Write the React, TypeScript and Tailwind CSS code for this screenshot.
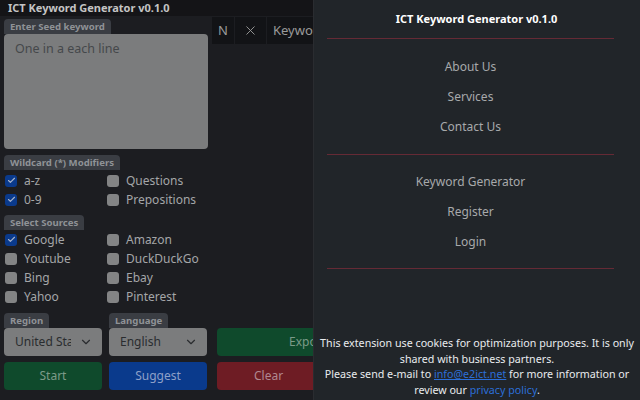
import { Check, ChevronDown, X } from 'lucide-react'

const font = { fontFamily: '"Noto Sans", "Open Sans", sans-serif' }

function Tag({ children }: { children: React.ReactNode }) {
  return (
    <div className="w-fit rounded-t-[4px] bg-[#3a3d43] px-[6px] h-[15px] leading-[15px] text-[9.6px] font-bold text-[#8f9296]">
      {children}
    </div>
  )
}

function Box({ label, checked }: { label: string; checked?: boolean }) {
  return (
    <label className="flex items-center h-[19px] gap-[7px] text-[12px] text-[#a4a6a8]">
      <span
        className={`flex items-center justify-center w-[12px] h-[12px] rounded-[3px] ${
          checked ? 'bg-[#0a3a8c]' : 'bg-[#838485]'
        }`}
      >
        {checked && <Check className="w-[9px] h-[9px] text-[#a8b4cc]" strokeWidth={3} />}
      </span>
      {label}
    </label>
  )
}

export default function App() {
  const sources = [
    ['Google', true],
    ['Amazon', false],
    ['Youtube', false],
    ['DuckDuckGo', false],
    ['Bing', false],
    ['Ebay', false],
    ['Yahoo', false],
    ['Pinterest', false],
  ] as const

  return (
    <div className="relative w-[640px] h-[400px] overflow-hidden bg-[#1c1d21]" style={font}>
      {/* Top bar */}
      <div className="h-[16px] bg-[#141417] pl-[8px] text-[11px] leading-[16px] font-bold text-[#c4c4c4]">
        ICT Keyword Generator v0.1.0
      </div>

      <div className="pl-[4px]">
        <div className="flex">
          {/* Left column */}
          <div className="w-[204px] flex flex-col pt-[3px]">
            <Tag>Enter Seed keyword</Tag>
            <div className="h-[115px] rounded-[4px] bg-[#7b7c7d] px-[11px] pt-[6px] text-[12.5px] text-[#45484b]">
              One in a each line
            </div>

            <div className="mt-[6px]">
              <Tag>Wildcard (*) Modifiers</Tag>
            </div>
            <div className="grid grid-cols-[102px_1fr] pl-[1px] mt-[1px]">
              <Box label="a-z" checked />
              <Box label="Questions" />
              <Box label="0-9" checked />
              <Box label="Prepositions" />
            </div>

            <div className="mt-[6px]">
              <Tag>Select Sources</Tag>
            </div>
            <div className="grid grid-cols-[102px_1fr] pl-[1px]">
              {sources.map(([l, c]) => (
                <Box key={l} label={l} checked={c} />
              ))}
            </div>
          </div>

          {/* Table header */}
          <div className="ml-[4px] flex h-[27px] mt-[1px] bg-[#121316] text-[13px] text-[#9a9a9a]">
            <div className="w-[23px] flex items-center justify-center border-r border-[#1c1d21]">N</div>
            <div className="w-[32px] flex items-center justify-center border-r border-[#1c1d21]">
              <X className="w-[15px] h-[15px]" strokeWidth={1.5} />
            </div>
            <div className="w-[60px] pl-[6px] flex items-center overflow-hidden whitespace-nowrap">Keyword</div>
          </div>
        </div>

        {/* Bottom controls */}
        <div className="mt-[7px] grid grid-cols-[98px_98px_120px] gap-x-[7px]">
          <Tag>Region</Tag>
          <Tag>Language</Tag>
          <div />
          <div className="h-[28px] rounded-[4px] bg-[#7b7c7d] flex items-center justify-between pl-[11px] pr-[9px] text-[12px] text-[#2a2c2f]">
            <span className="overflow-hidden whitespace-nowrap w-[56px]">United States</span>
            <ChevronDown className="w-[14px] h-[14px]" />
          </div>
          <div className="h-[28px] rounded-[4px] bg-[#7b7c7d] flex items-center justify-between pl-[11px] pr-[9px] text-[12px] text-[#2a2c2f]">
            <span>English</span>
            <ChevronDown className="w-[14px] h-[14px]" />
          </div>
          <div className="ml-[3px] h-[28px] rounded-[4px] bg-[#0f4a2c] flex items-center pl-[72px] text-[12px] text-[#7c9a88]">
            Export
          </div>
          <div className="mt-[6px] h-[28px] rounded-[4px] bg-[#0f4a2c] flex items-center justify-center text-[12px] text-[#7c9a88]">
            Start
          </div>
          <div className="mt-[6px] h-[28px] rounded-[4px] bg-[#0a3a8c] flex items-center justify-center text-[12px] text-[#8ea0c8]">
            Suggest
          </div>
          <div className="ml-[3px] mt-[6px] h-[28px] rounded-[4px] bg-[#6e1c24] flex items-center pl-[37px] text-[12px] text-[#b08890]">
            Clear
          </div>
        </div>
      </div>

      {/* Offcanvas */}
      <div className="absolute top-0 right-0 w-[327px] h-[400px] bg-[#212529] border-l border-[#2a2c30] flex flex-col">
        <div className="pt-[11px] text-center text-[11px] font-bold text-white pr-[1px]">ICT Keyword Generator v0.1.0</div>
        <div className="ml-[13px] mr-[26px] mt-[10px] h-[1px] bg-[#652a35]" />
        <div className="flex flex-col items-center text-[12px] text-[#a7a9ab] pr-[13px] pt-[19px] gap-[12px] leading-[18px]">
          <span>About Us</span>
          <span>Services</span>
          <span>Contact Us</span>
        </div>
        <div className="ml-[13px] mr-[26px] mt-[18px] h-[1px] bg-[#652a35]" />
        <div className="flex flex-col items-center text-[12px] text-[#a7a9ab] pr-[13px] pt-[18px] gap-[12px] leading-[18px]">
          <span>Keyword Generator</span>
          <span>Register</span>
          <span>Login</span>
        </div>
        <div className="ml-[13px] mr-[26px] mt-[17px] h-[1px] bg-[#652a35]" />
        <div className="mt-auto pb-[2px] px-[4px] text-center text-[10.7px] leading-[15.5px] text-[#e9ecef]">
          This extension use cookies for optimization purposes. It is only shared with business partners.
          <br />
          Please send e-mail to <span className="text-[#2c6fd8] underline">info@e2ict.net</span> for more information or review our{' '}
          <span className="text-[#2c6fd8]">privacy policy</span>.
        </div>
      </div>
    </div>
  )
}
